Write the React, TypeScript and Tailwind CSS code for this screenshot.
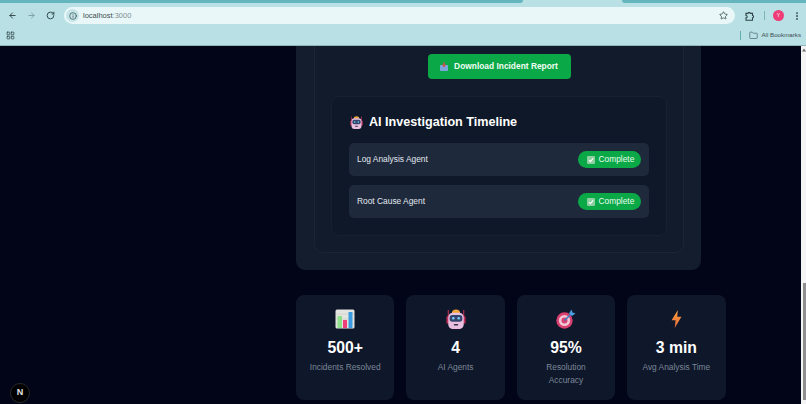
import type { ReactNode } from "react";
import { ArrowLeft, ArrowRight, RotateCw, Info, Star, EllipsisVertical, LayoutGrid, Folder } from "lucide-react";

function ChartIcon() {
  return (
    <svg width="20" height="20" viewBox="0 0 20 20">
      <rect x="0.5" y="0.5" width="19" height="19" rx="1.5" fill="#e4e4e0" />
      <path d="M1 5h18M1 10h18M1 15h18" stroke="#c9c9c6" strokeWidth="0.6" />
      <rect x="2.5" y="7" width="4.5" height="12" fill="#8fe08a" />
      <rect x="8" y="11" width="4" height="8" fill="#ef3f78" />
      <rect x="13.5" y="3" width="4" height="16" fill="#3a9be0" />
    </svg>
  );
}

function RobotIcon({ size = 20 }: { size?: number }) {
  return (
    <svg width={size} height={size} viewBox="0 0 22 22">
      <path d="M2.5 1v7M19.5 1v7" stroke="#c2305a" strokeWidth="1.2" />
      <path d="M6.5 4.5a4.5 4 0 0 1 9 0z" fill="#f0a83c" />
      <rect x="0.5" y="8" width="3" height="8" rx="1" fill="#c2305a" />
      <rect x="18.5" y="8" width="3" height="8" rx="1" fill="#c2305a" />
      <rect x="2.5" y="4" width="17" height="18" rx="5" fill="#e9bfe0" />
      <rect x="4" y="6.5" width="14" height="7.5" rx="3" fill="#33456e" />
      <circle cx="8" cy="10.2" r="1.4" fill="#7fd0f5" />
      <circle cx="14" cy="10.2" r="1.4" fill="#7fd0f5" />
      <rect x="8.5" y="16.5" width="5" height="1.6" rx="0.8" fill="#3a2f4a" />
    </svg>
  );
}

function TargetIcon() {
  return (
    <svg width="20" height="20" viewBox="0 0 20 20">
      <circle cx="8.5" cy="11.5" r="8.2" fill="#d8406f" />
      <circle cx="8.5" cy="11.5" r="5.6" fill="#f3c6d6" />
      <circle cx="8.5" cy="11.5" r="3" fill="#d8406f" />
      <path d="M8.5 11.5 15 5" stroke="#3a7fc4" strokeWidth="1.6" />
      <path d="M13 4.5 15.5 0.5 16.5 3.5 19.5 4.5 16 7z" fill="#4a9fe0" />
    </svg>
  );
}

function BoltIcon() {
  return (
    <svg width="11" height="18" viewBox="0 0 12 20">
      <defs>
        <linearGradient id="bolt" x1="0" y1="0" x2="0" y2="1">
          <stop offset="0" stopColor="#f5a13c" />
          <stop offset="1" stopColor="#ee6a3a" />
        </linearGradient>
      </defs>
      <path d="M7.5 0 0.5 11.5H5L4 20 11.5 7.5H6.8z" fill="url(#bolt)" />
    </svg>
  );
}

function InboxIcon() {
  return (
    <svg width="8" height="9" viewBox="0 0 8 9">
      <rect x="0" y="3" width="8" height="6" rx="0.8" fill="#7ba6dc" />
      <path d="M4 0v4M2.5 2.5 4 4.5l1.5-2" stroke="#d84b4b" strokeWidth="1.2" fill="none" />
    </svg>
  );
}

function ExtensionIcon() {
  return (
    <svg width="10" height="10" viewBox="0 0 10 10" fill="none" stroke="currentColor" strokeWidth="1.1">
      <path d="M1 2.4h2a1.1 1.1 0 0 1 2.2 0h2.3v2.1a1.1 1.1 0 0 1 0 2.2v2.5H1V6.9a1.2 1.2 0 0 0 0-2.4z" />
    </svg>
  );
}

function CheckBox() {
  return (
    <span className="flex h-[8px] w-[8px] items-center justify-center rounded-[1px] bg-[#8ccfa0]">
      <svg width="6" height="6" viewBox="0 0 7 7">
        <path d="M1 3.6 2.8 5.4 6 1.6" stroke="#fff" strokeWidth="1.3" fill="none" />
      </svg>
    </span>
  );
}

function AgentRow({ name }: { name: string }) {
  return (
    <div className="flex h-[33px] items-center justify-between rounded-[5px] bg-[#1e293b] px-2">
      <span className="text-[8.4px] text-[#e2e8f0]">{name}</span>
      <span className="flex h-[17px] w-[63px] items-center gap-1 rounded-full bg-[#0aa846] pl-[8.5px] text-[8.4px] text-[#e8fdf0]">
        <CheckBox />
        Complete
      </span>
    </div>
  );
}

function StatCard({ icon, value, label }: { icon: ReactNode; value: string; label: string }) {
  return (
    <div className="flex h-[105px] w-[98.4px] flex-col items-center rounded-lg bg-[#0f172a] px-[12.5px] pt-[13px] text-center">
      <div className="flex h-[22px] items-center justify-center">{icon}</div>
      <div className="mt-[6px] text-[15.75px] leading-[24px] font-bold text-white">{value}</div>
      <div className="mt-[1px] text-[8.4px] leading-[12.6px] text-[#7b8798]">{label}</div>
    </div>
  );
}

export default function App() {
  return (
    <div className="flex h-[404px] w-[806px] flex-col overflow-hidden font-['Liberation_Sans',Arial,sans-serif]">
      {/* Browser chrome */}
      <div className="h-[46px] shrink-0 border-b border-[#8fb4ba] bg-[#b8e0e5]">
        <div className="flex h-[3px]">
          <div className="w-[523px] rounded-br-sm bg-[#65b5bf]" />
          <div className="w-[99px]" />
          <div className="flex-1 rounded-bl-sm bg-[#65b5bf]" />
        </div>
        <div className="flex h-[25px] items-center pl-2 text-[#2f4549]">
          <ArrowLeft size={9} strokeWidth={2.5} />
          <ArrowRight size={9} strokeWidth={2.5} className="ml-[10px] text-[#7d9ea3]" />
          <RotateCw size={9} strokeWidth={2.5} className="ml-[10px]" />
          <div className="ml-[9px] flex h-[17px] w-[671px] items-center rounded-full bg-[#e9f7f8] pl-[2px] pr-[7.5px]">
            <span className="flex h-[13px] w-[13px] items-center justify-center rounded-full bg-[#c5e4e8]">
              <Info size={8} strokeWidth={2} />
            </span>
            <span className="ml-[4px] text-[7.5px] text-[#3b4d50]">
              localhost<span className="text-[#7d8f92]">:3000</span>
            </span>
            <Star size={9} strokeWidth={2} className="ml-auto" />
          </div>
          <span className="ml-[10px]">
            <ExtensionIcon />
          </span>
          <div className="ml-[9px] h-[9px] w-px bg-[#7fb3ba]" />
          <span className="ml-[8px] flex h-[11px] w-[11px] items-center justify-center rounded-full bg-[#ee3d78] text-[5px] text-white">
            Y
          </span>
          <EllipsisVertical size={10} strokeWidth={2.5} className="ml-[8px]" />
        </div>
        <div className="flex h-[14px] items-center pl-[6px] pr-[5px] text-[#2f4549]">
          <LayoutGrid size={9} strokeWidth={2} />
          <div className="ml-auto h-[9px] w-px bg-[#65a9b2]" />
          <Folder size={9} strokeWidth={1.5} className="ml-[8px]" />
          <span className="ml-[3px] text-[6.2px] text-[#3b4d50]">All Bookmarks</span>
        </div>
      </div>

      <div className="relative flex min-h-0 flex-1 bg-[#020417]">
        <main className="min-w-0 flex-1 pl-[296px]">
          {/* Report card */}
          <section className="h-[224px] w-[405px] rounded-b-[9px] bg-[#141d2e] pl-[18px] pr-[17px] pb-[17px]">
            <div className="h-full rounded-b-[9px] border border-t-0 border-[#1a2536] bg-[#121b2b] px-4 pb-[17px] pt-2">
              <div className="flex justify-center">
                <button className="flex h-[25px] w-[143px] items-center justify-center gap-[6px] rounded bg-[#0aa846] text-[8.4px] font-bold text-[#f0fdf4]">
                  <InboxIcon />
                  Download Incident Report
                </button>
              </div>
              <div className="mt-[17px] h-[140px] rounded-lg border border-[#172031] bg-[#0f1828] px-[17px] pt-[15px]">
                <h2 className="flex h-[20px] items-center gap-[6px] pl-px text-[12.6px] font-bold text-white">
                  <RobotIcon size={13} />
                  AI Investigation Timeline
                </h2>
                <div className="mt-[11px] flex flex-col gap-[9px]">
                  <AgentRow name="Log Analysis Agent" />
                  <AgentRow name="Root Cause Agent" />
                </div>
              </div>
            </div>
          </section>

          {/* Stats */}
          <section className="mt-[25px] flex gap-3">
            <StatCard icon={<ChartIcon />} value="500+" label="Incidents Resolved" />
            <StatCard icon={<RobotIcon />} value="4" label="AI Agents" />
            <StatCard icon={<TargetIcon />} value="95%" label="Resolution Accuracy" />
            <StatCard icon={<BoltIcon />} value="3 min" label="Avg Analysis Time" />
          </section>
        </main>

        {/* Scrollbar */}
        <div className="flex w-[5px] shrink-0 flex-col bg-[#f4f4f4] pl-[1.5px] pt-[237px]">
          <div className="h-[117px] w-full bg-[#8f8f8f]" />
        </div>
        <svg width="4" height="4" viewBox="0 0 4 4" className="absolute right-0 top-[2px]">
          <path d="M2 0.5 4 3.5H0z" fill="#6f6f6f" />
        </svg>

        {/* Next dev badge */}
        <div className="absolute bottom-[1px] left-[10px] flex h-[20px] w-[20px] items-center justify-center rounded-full border border-[#2a2a2a] bg-black text-[9px] font-bold text-[#e5e5e5]">
          N
        </div>
      </div>
    </div>
  );
}
